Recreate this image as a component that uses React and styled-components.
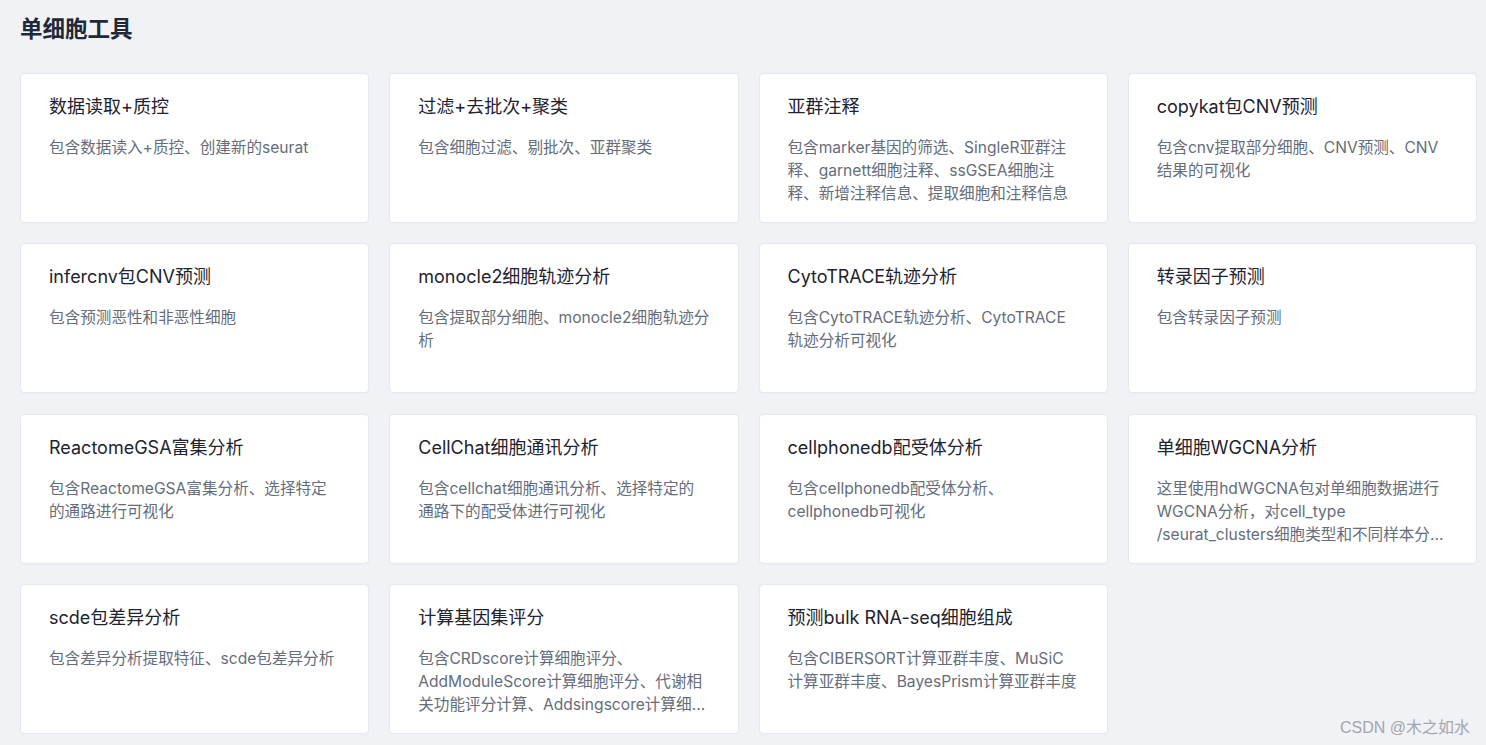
import React from 'react';
import styled, { createGlobalStyle } from 'styled-components';

const GlobalStyle = createGlobalStyle`
  html, body {
    margin: 0;
    padding: 0;
    background: #f0f2f6;
  }
  body {
    font-family: Inter, "Noto Sans CJK SC", "Noto Sans", sans-serif;
  }
`;

const Page = styled.div`
  position: relative;
  min-height: 745px;
  box-sizing: border-box;
  padding: 14px 9px 10px 20px;
  background: #f0f2f6;
`;

const Heading = styled.h2`
  margin: 0 0 29px;
  font-size: 22.5px;
  line-height: 30px;
  font-weight: 700;
  color: #1f2937;
`;

const Grid = styled.div`
  display: grid;
  grid-template-columns: repeat(4, 1fr);
  grid-auto-rows: 150px;
  gap: 20.33px 20px;
`;

const Card = styled.div`
  background: #fff;
  border: 1px solid #e5e8ee;
  border-radius: 4px;
  box-sizing: border-box;
  padding: 21px 28px;
  box-shadow: 0 0 2px rgba(0, 0, 0, 0.04);
`;

const CardTitle = styled.div`
  font-size: 18px;
  line-height: 24px;
  color: #1e2330;
  margin-bottom: 17px;
  white-space: nowrap;
`;

const CardDesc = styled.div`
  font-size: 15.6px;
  line-height: 23px;
  color: #656d7b;
  display: -webkit-box;
  -webkit-line-clamp: 3;
  -webkit-box-orient: vertical;
  overflow: hidden;
`;

const Watermark = styled.div`
  position: absolute;
  right: 16px;
  bottom: 7px;
  font-size: 16px;
  color: #a3a6ab;
  font-family: "Liberation Sans", "Noto Sans CJK SC", sans-serif;
`;

const tools = [
  { title: '数据读取+质控', desc: '包含数据读入+质控、创建新的seurat' },
  { title: '过滤+去批次+聚类', desc: '包含细胞过滤、剔批次、亚群聚类' },
  { title: '亚群注释', desc: '包含marker基因的筛选、SingleR亚群注释、garnett细胞注释、ssGSEA细胞注释、新增注释信息、提取细胞和注释信息' },
  { title: 'copykat包CNV预测', desc: '包含cnv提取部分细胞、CNV预测、CNV结果的可视化' },
  { title: 'infercnv包CNV预测', desc: '包含预测恶性和非恶性细胞' },
  { title: 'monocle2细胞轨迹分析', desc: '包含提取部分细胞、monocle2细胞轨迹分析' },
  { title: 'CytoTRACE轨迹分析', desc: '包含CytoTRACE轨迹分析、CytoTRACE轨迹分析可视化' },
  { title: '转录因子预测', desc: '包含转录因子预测' },
  { title: 'ReactomeGSA富集分析', desc: '包含ReactomeGSA富集分析、选择特定的通路进行可视化' },
  { title: 'CellChat细胞通讯分析', desc: '包含cellchat细胞通讯分析、选择特定的通路下的配受体进行可视化' },
  { title: 'cellphonedb配受体分析', desc: '包含cellphonedb配受体分析、cellphonedb可视化' },
  { title: '单细胞WGCNA分析', desc: '这里使用hdWGCNA包对单细胞数据进行WGCNA分析，对cell_type /seurat_clusters细胞类型和不同样本分组进行分析' },
  { title: 'scde包差异分析', desc: '包含差异分析提取特征、scde包差异分析' },
  { title: '计算基因集评分', desc: '包含CRDscore计算细胞评分、AddModuleScore计算细胞评分、代谢相关功能评分计算、Addsingscore计算细胞评分' },
  { title: '预测bulk RNA-seq细胞组成', desc: '包含CIBERSORT计算亚群丰度、MuSiC计算亚群丰度、BayesPrism计算亚群丰度' },
];

export default function App() {
  return (
    <Page>
      <GlobalStyle />
      <Heading>单细胞工具</Heading>
      <Grid>
        {tools.map(t => (
          <Card key={t.title}>
            <CardTitle>{t.title}</CardTitle>
            <CardDesc>{t.desc}</CardDesc>
          </Card>
        ))}
      </Grid>
      <Watermark>CSDN @木之如水</Watermark>
    </Page>
  );
}
